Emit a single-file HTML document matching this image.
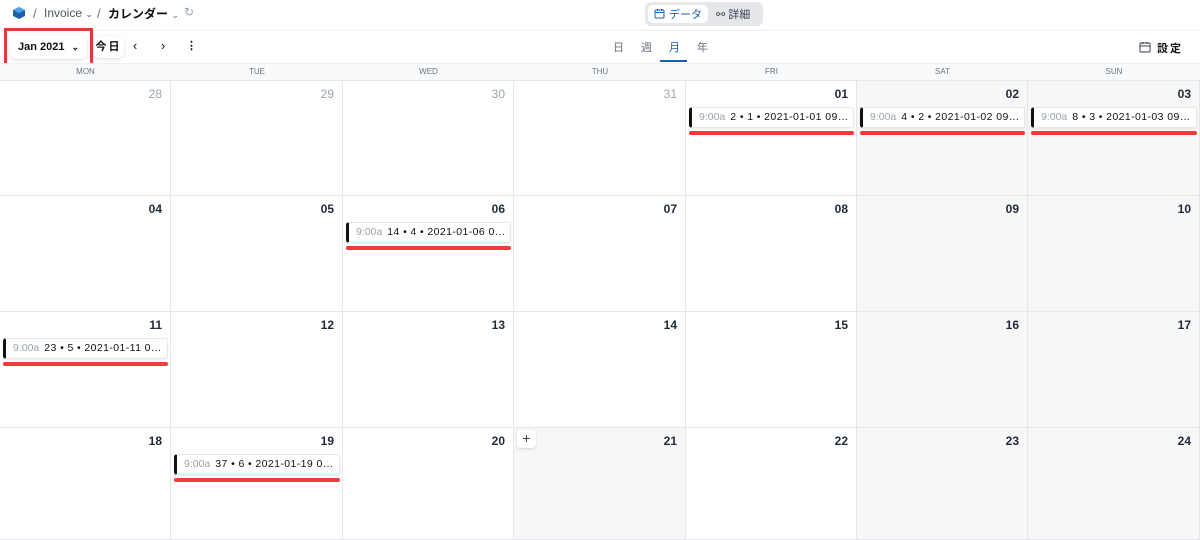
<!DOCTYPE html>
<html><head><meta charset="utf-8"><style>
*{box-sizing:border-box;margin:0;padding:0}
body{width:1200px;height:517px;overflow:hidden;background:#fff;font-family:"Liberation Sans","Noto Sans CJK JP",sans-serif;color:#1f2937;position:relative}
.a{position:absolute}
.cell{position:absolute;border-right:1px solid #e5e7eb;border-bottom:1px solid #e5e7eb}
.num{position:absolute;right:8px;top:6px;font-size:12px;font-weight:bold;color:#1f2937}
.num.g{color:#9ca3af;font-weight:normal}
.ev{position:absolute;height:21px;border:1px solid #e5e7eb;border-left:3px solid #111;border-radius:3px;background:#fff;font-size:10.5px;letter-spacing:0.4px;line-height:19px;padding-left:7px;padding-right:3px;white-space:nowrap;overflow:hidden;text-overflow:ellipsis;box-shadow:0 1px 2px rgba(0,0,0,.08);color:#111}
.ev span{color:#9ca3af;margin-right:5px;letter-spacing:0}
.ul{position:absolute;height:4px;background:#ef3b3b;border-radius:2px}
.wd{position:absolute;top:63px;height:18px;font-size:8px;color:#6b7280;text-align:center;line-height:18px}
</style></head><body>
<svg class="a" style="left:12px;top:6px" width="14" height="14" viewBox="0 0 14 14"><path d="M7 1L13 4V10L7 13L1 10V4Z" fill="#1e5fa8"/><path d="M7 1L13 4L7 7L1 4Z" fill="#4aa3e8"/></svg>
<div class="a" style="left:33px;top:6px;font-size:13px;color:#6b7280">/</div>
<div class="a" style="left:44px;top:6px;font-size:12px;color:#4b5563">Invoice <span style="font-size:9px">⌄</span></div>
<div class="a" style="left:97px;top:6px;font-size:13px;color:#6b7280">/</div>
<div class="a" style="left:108px;top:5px;font-size:12px;font-weight:bold;color:#111">カレンダー <span style="font-size:9px;color:#6b7280;font-weight:normal">⌄</span></div>
<div class="a" style="left:184px;top:5px;font-size:12px;color:#9ca3af">↻</div>
<div class="a" style="left:645px;top:2px;width:118px;height:24px;background:#e5e7eb;border-radius:6px"></div>
<div class="a" style="left:648px;top:5px;width:60px;height:18px;background:#fff;border-radius:5px"></div>
<svg class="a" style="left:654px;top:8px" width="11" height="11" viewBox="0 0 11 11"><rect x="1" y="2" width="9" height="8" rx="1" fill="none" stroke="#1e5fa8"/><path d="M1 4.5H10M3.5 1V3M7.5 1V3" stroke="#1e5fa8"/></svg>
<div class="a" style="left:669px;top:6px;font-size:11px;color:#1e5fa8">データ</div>
<div class="a" style="left:716px;top:6px;font-size:11px;color:#374151">⚯ 詳細</div>
<div class="a" style="left:0;top:30px;width:1200px;height:1px;background:#eef0f2"></div>
<div class="a" style="left:10px;top:35px;width:77px;height:24px;border-radius:6px;box-shadow:0 1px 3px rgba(0,0,0,.15);background:#fff;font-size:11px;font-weight:bold;line-height:24px;padding-left:8px;color:#111">Jan 2021 <span style="font-size:9px;margin-left:4px">⌄</span></div>
<div class="a" style="left:4px;top:28px;width:89px;height:38px;border:3px solid #e53935"></div>
<div class="a" style="left:93px;top:36px;width:31px;height:22px;border-radius:6px;box-shadow:0 1px 3px rgba(0,0,0,.15);font-size:11px;font-weight:bold;line-height:22px;text-align:center;color:#111;letter-spacing:2px;background:#fff">今日</div>
<div class="a" style="left:133px;top:38px;font-size:13px;color:#111">‹</div>
<div class="a" style="left:161px;top:38px;font-size:13px;color:#111">›</div>
<div class="a" style="left:186px;top:39px;font-size:11px;font-weight:bold;color:#111">⋮</div>
<div class="a" style="left:613px;top:39px;font-size:11px;color:#6b7280">日</div>
<div class="a" style="left:641px;top:39px;font-size:11px;color:#6b7280">週</div>
<div class="a" style="left:669px;top:39px;font-size:11px;color:#1e5fa8">月</div>
<div class="a" style="left:660px;top:60px;width:27px;height:2px;background:#1e5fa8"></div>
<div class="a" style="left:697px;top:39px;font-size:11px;color:#6b7280">年</div>
<svg class="a" style="left:1139px;top:41px" width="12" height="12" viewBox="0 0 12 12"><rect x="1" y="2" width="10" height="9" rx="1" fill="none" stroke="#374151"/><path d="M1 5H11M4 1V3M8 1V3" stroke="#374151"/></svg>
<div class="a" style="left:1157px;top:40px;font-size:11px;font-weight:bold;color:#111;letter-spacing:2px">設定</div>
<div class="a" style="left:1195px;top:40px;font-size:11px;color:#9ca3af">⋮</div>
<div class="a" style="left:0;top:63px;width:1200px;height:18px;background:#f9fafb;border-top:1px solid #eef0f2;border-bottom:1px solid #e5e7eb"></div>
<div class="wd" style="left:0;width:171px">MON</div><div class="wd" style="left:171px;width:172px">TUE</div><div class="wd" style="left:343px;width:171px">WED</div><div class="wd" style="left:514px;width:172px">THU</div><div class="wd" style="left:686px;width:171px">FRI</div><div class="wd" style="left:857px;width:171px">SAT</div><div class="wd" style="left:1028px;width:172px">SUN</div>
<div id="g"></div>
<script>
var xs=[0,171,343,514,686,857,1028,1200],ys=[81,196,312,428,540];
var nums=[["28","29","30","31","01","02","03"],["04","05","06","07","08","09","10"],["11","12","13","14","15","16","17"],["18","19","20","21","22","23","24"]];
var h="";
for(var r=0;r<4;r++)for(var c=0;c<7;c++){
var bg=(c>=5||(r==3&&c==3))?"#f7f7f8":"#fff";
h+='<div class="cell" style="left:'+xs[c]+'px;top:'+ys[r]+'px;width:'+(xs[c+1]-xs[c])+'px;height:'+(ys[r+1]-ys[r])+'px;background:'+bg+'"><div class="num'+(r==0&&c<4?' g':'')+'">'+nums[r][c]+'</div></div>';}
var ev=[[0,4,"2 • 1 • 2021-01-01 09:00:00"],[0,5,"4 • 2 • 2021-01-02 09:00:00"],[0,6,"8 • 3 • 2021-01-03 09:00:00"],[1,2,"14 • 4 • 2021-01-06 09:00:00"],[2,0,"23 • 5 • 2021-01-11 09:00:00"],[3,1,"37 • 6 • 2021-01-19 09:00:00"]];
ev.forEach(function(e){var x=xs[e[1]]+3,w=xs[e[1]+1]-xs[e[1]]-6,y=ys[e[0]]+26;
h+='<div class="ev" style="left:'+x+'px;top:'+y+'px;width:'+w+'px"><span>9:00a</span>'+e[2]+'</div>';
h+='<div class="ul" style="left:'+(x)+'px;top:'+(y+24)+'px;width:'+(w)+'px"></div>';});
h+='<div class="a" style="left:517px;top:430px;width:19px;height:18px;background:#fff;border-radius:4px;box-shadow:0 1px 2px rgba(0,0,0,.15);text-align:center;font-size:14px;line-height:17px;color:#374151">+</div>';
document.getElementById("g").innerHTML=h;
</script>
</body></html>
